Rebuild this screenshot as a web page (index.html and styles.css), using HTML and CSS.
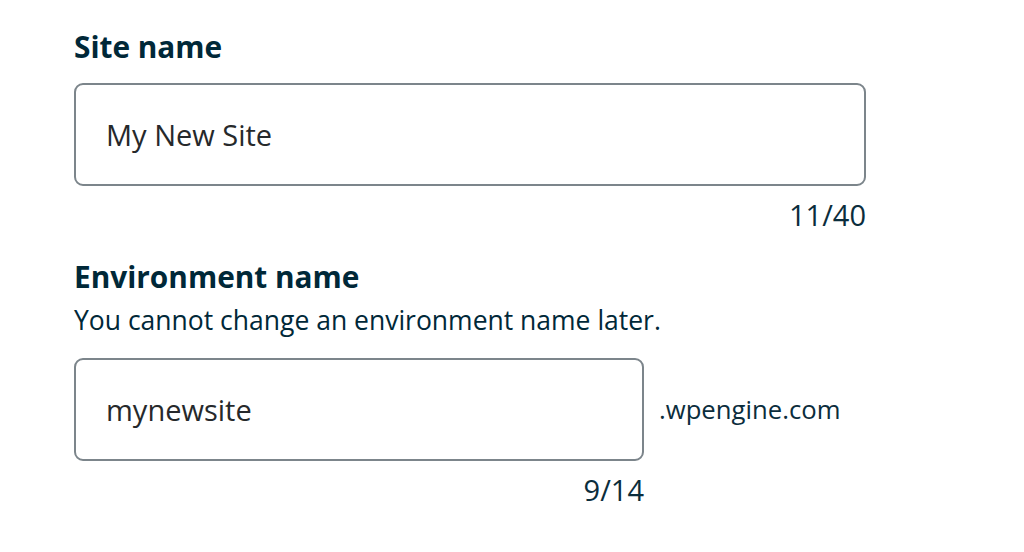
FILE: index.html
```html
<!DOCTYPE html>
<html>
<head>
<meta charset="utf-8">
<link rel="stylesheet" href="styles.css">
</head>
<body>
<div class="form">
  <div class="field field-site">
    <label class="label" for="site">Site name</label>
    <div class="input-col wide">
      <input id="site" class="input" type="text" value="My New Site">
      <div class="counter">11/40</div>
    </div>
  </div>
  <div class="field field-env">
    <label class="label" for="env">Environment name</label>
    <p class="help">You cannot change an environment name later.</p>
    <div class="input-row">
      <div class="input-col narrow">
        <input id="env" class="input" type="text" value="mynewsite">
        <div class="counter">9/14</div>
      </div>
      <span class="suffix">.wpengine.com</span>
    </div>
  </div>
</div>
</body>
</html>
```

FILE: styles.css
```css
html, body {
  margin: 0;
  padding: 0;
  background: #ffffff;
}
body {
  font-family: "Open Sans", "Noto Sans", sans-serif;
  color: #002838;
}
.form {
  display: flex;
  flex-direction: column;
  padding: 29px 0 0 74px;
}
.field {
  display: flex;
  flex-direction: column;
}
.label {
  font-size: 29.8px;
  font-weight: 700;
  line-height: 36px;
  color: #002838;
}
.field-site .label {
  margin-bottom: 18px;
}
.field-env {
  margin-top: 23px;
}
.help {
  margin: 7px 0 0;
  font-size: 26.5px;
  line-height: 36px;
  color: #002838;
}
.input-col {
  display: flex;
  flex-direction: column;
  align-items: flex-end;
}
.input-col.wide {
  width: 792px;
}
.input-col.narrow {
  width: 570px;
}
.input-row {
  display: flex;
  align-items: flex-start;
  margin-top: 20px;
}
.input {
  box-sizing: border-box;
  width: 100%;
  height: 103px;
  margin: 0;
  padding: 0 0 0 30px;
  border: 2px solid #7c858b;
  border-radius: 9px;
  font-family: "Open Sans", "Noto Sans", sans-serif;
  font-size: 29px;
  color: #26292b;
  background: #ffffff;
  outline: none;
}
.counter {
  margin-top: 8px;
  font-size: 29px;
  line-height: 42px;
  color: #0b2d3c;
}
.suffix {
  margin-left: 15px;
  height: 103px;
  display: flex;
  align-items: center;
  font-size: 25.7px;
  color: #0b2d3c;
}
```
